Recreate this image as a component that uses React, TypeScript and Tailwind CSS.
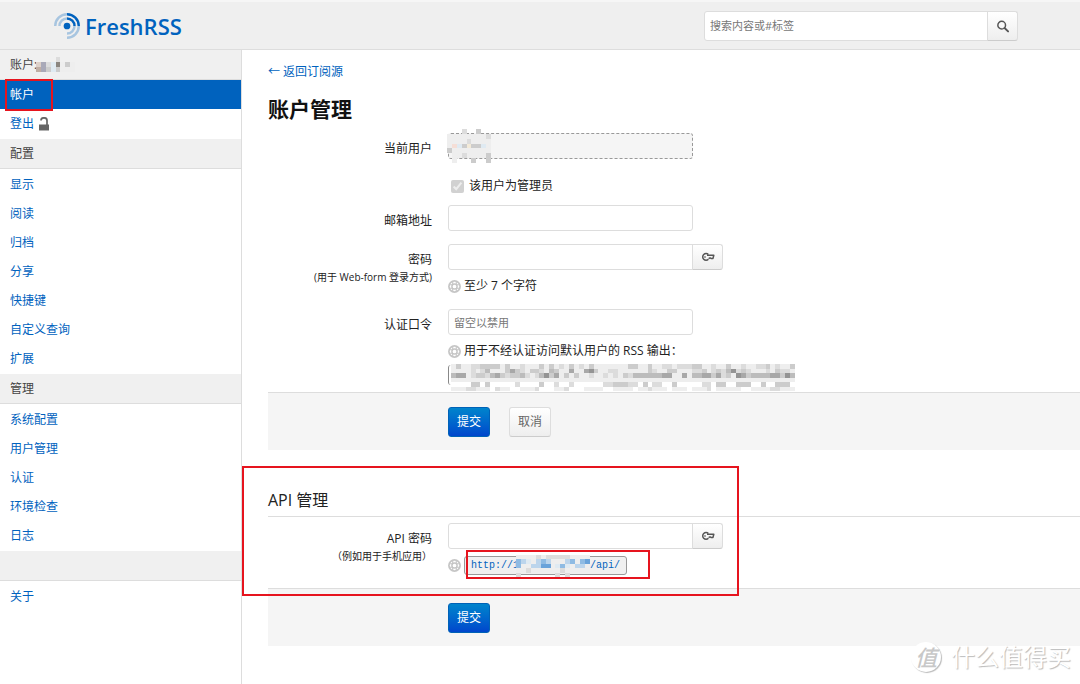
import type { ReactNode } from "react";

const PALETTE: Record<string, string> = {
  "0": "#ffffff",
  "1": "#eeeeee",
  "2": "#dcdcdc",
  "3": "#cccccc",
  "4": "#bcbcbc",
  "5": "#a8a8a8",
  "6": "#949494",
  "7": "#8a857f",
  p: "#f5ded6",
  y: "#f3ead8",
  s: "#ddd0c8",
  t: "#bfaea4",
  u: "#a9a9b8",
  a: "#dfeaf2",
  b: "#bcd5ec",
  c: "#8fbbe3",
  d: "#6aa3da",
};

const USER_BLUR = ["   2  3  ", "111111112", "111121111", "1pa3y33a1", "311111111", " 11211113", " 1   3  3"];
const NAME_BLUR = ["    2   ", "su2a7131", "tu3a3111"];
const API_BLUR = [
  "111121222221111",
  "cba1bcb111bc1cd",
  "c11bbdd1aca1bb1",
  "112111111211111",
  "2       2 2    ",
];
const FEED_BLUR = [
  "1311223333131121113131213121311111113311311221222331121131121122312113",
  "1111212411135321332143115115631122111111321133111223123246232111213221",
  "4551233245323342124635131311211212132444444551151445535231653444455364",
  "1111111111111111111111111111111111111111111111111111111111111111111111",
  "0000330300000200003002002000000223332203022003000002203300333003003330",
  "1112211102110011120001120001111001111011211101110111201111100111122111",
];

function Mosaic({ rows, className }: { rows: string[]; className: string }) {
  return (
    <svg
      aria-hidden="true"
      viewBox={`0 0 ${rows[0].length} ${rows.length}`}
      preserveAspectRatio="none"
      shapeRendering="crispEdges"
      className={className}
    >
      {rows.map((row, y) =>
        row.split("").map((c, x) =>
          c === " " ? null : <rect key={`${x}-${y}`} x={x} y={y} width="1" height="1" fill={PALETTE[c]} />
        )
      )}
    </svg>
  );
}

function Logo() {
  return (
    <svg viewBox="0 0 256 256" className="size-[26px]" fill="none" stroke="#0062be" strokeWidth="24" aria-hidden="true">
      <circle cx="128" cy="128" r="33" fill="#0062be" stroke="none" />
      <g strokeOpacity="0.3">
        <path d="M12,128 A116,116 0 0,1 128,12" />
        <path d="M54,128 A74,74 0 0,1 128,54" />
        <path d="M244,128 A116,116 0 0,1 128,244" />
        <path d="M202,128 A74,74 0 0,1 128,202" />
      </g>
      <path d="M128,12 A116,116 0 0,1 244,128" />
      <path d="M128,54 A74,74 0 0,1 202,128" />
    </svg>
  );
}

function SearchIcon() {
  return (
    <svg viewBox="0 0 16 16" className="size-[14px]" fill="none" stroke="#555" aria-hidden="true">
      <circle cx="6.5" cy="7" r="4.4" strokeWidth="1.7" />
      <path d="M9.8 10.3 L13.8 14.2" strokeWidth="2.2" strokeLinecap="round" />
    </svg>
  );
}

function KeyIcon() {
  return (
    <svg viewBox="0 0 14 10" className="h-[10px] w-[14px]" fill="none" stroke="#555" strokeWidth="1.5" aria-hidden="true">
      <path d="M7.4 2.6 A3.3 3.3 0 1 0 7.4 7.2" />
      <path d="M6 3.2 H12.8 L12 6.4 H10 L9 5.8 L7.6 6.6" strokeLinejoin="round" />
      <path d="M3 5 H5" strokeWidth="1.2" />
    </svg>
  );
}

function HelpIcon() {
  return (
    <svg viewBox="0 0 16 16" className="size-[13px] shrink-0" fill="none" stroke="#c6c6c6" aria-hidden="true">
      <circle cx="8" cy="8" r="6.9" strokeWidth="2.1" />
      <circle cx="8" cy="8" r="3.2" strokeWidth="1.8" />
      <path d="M5.8 1.5 V5.5 M10.2 1.5 V5.5 M5.8 10.5 V14.5 M10.2 10.5 V14.5" strokeWidth="1.4" />
      <path d="M1.5 5.8 H5.5 M10.5 5.8 H14.5 M1.5 10.2 H5.5 M10.5 10.2 H14.5" strokeWidth="1.4" />
    </svg>
  );
}

function LockIcon() {
  return (
    <svg viewBox="0 0 12 14" className="h-[14px] w-[12px]" aria-hidden="true">
      <path d="M3 3.6 V3.4 A3 2.6 0 0 1 9 3.4 V8" fill="none" stroke="#666" strokeWidth="1.7" />
      <rect x="1" y="7.5" width="10" height="6" fill="#666" />
    </svg>
  );
}

function NavHeader({ children }: { children?: ReactNode }) {
  return <div className="flex h-[30px] items-center border-b border-[#ddd] bg-[#f0f0f0] px-[10px] text-[#444]">{children}</div>;
}

function NavItem({ children }: { children: ReactNode }) {
  return (
    <li>
      <a href="#" className="flex h-[29px] items-center px-[10px] text-[#0062be]">
        {children}
      </a>
    </li>
  );
}

const CONFIG_LINKS = ["显示", "阅读", "归档", "分享", "快捷键", "自定义查询", "扩展"];
const ADMIN_LINKS = ["系统配置", "用户管理", "认证", "环境检查", "日志"];

function Sidebar() {
  return (
    <nav className="w-[242px] shrink-0 border-r border-[#ddd]">
      <NavHeader>
        <span className="relative">
          账户:
          <Mosaic rows={NAME_BLUR} className="absolute top-0 left-[26px] h-[15px] w-[39px]" />
        </span>
      </NavHeader>
      <ul className="pb-px">
        <li className="relative">
          <a href="#" className="flex h-[29px] items-center bg-[#0062be] px-[10px] text-white">
            帐户
          </a>
          <span className="absolute -top-px left-[5px] h-[32px] w-[48px] border-2 border-[#e6141e]" />
        </li>
        <NavItem>
          登出
          <span className="ml-1">
            <LockIcon />
          </span>
        </NavItem>
      </ul>
      <NavHeader>配置</NavHeader>
      <ul className="py-px">
        {CONFIG_LINKS.map((l) => (
          <NavItem key={l}>{l}</NavItem>
        ))}
      </ul>
      <NavHeader>管理</NavHeader>
      <ul className="py-px">
        {ADMIN_LINKS.map((l) => (
          <NavItem key={l}>{l}</NavItem>
        ))}
      </ul>
      <NavHeader />
      <ul className="py-px">
        <NavItem>关于</NavItem>
      </ul>
    </nav>
  );
}

type RowProps = { label: string; hint?: string; htmlFor: string; children: ReactNode };

function Row({ label, hint, htmlFor, children }: RowProps) {
  return (
    <div className="flex gap-4 pt-[6px] pb-[7px]">
      <label htmlFor={htmlFor} className="w-[164px] shrink-0 pt-[6px] text-right leading-5">
        {label}
        {hint && <small className="block text-[10px] leading-[14px]">{hint}</small>}
      </label>
      <div>{children}</div>
    </div>
  );
}

function Help({ children }: { children: ReactNode }) {
  return <div className="mt-[6px] flex h-5 items-center gap-[3px]">{children}</div>;
}

function PasswordField({ id }: { id: string }) {
  return (
    <div className="flex">
      <input id={id} type="password" className="h-[26px] w-[245px] rounded-l-[3px] border border-[#ddd] bg-white px-[6px]" />
      <button
        type="button"
        aria-label="显示密码"
        className="-ml-px flex h-[26px] w-[31px] items-center justify-center rounded-r-[3px] border border-[#ddd] border-b-[#ccc] bg-linear-to-b from-white to-[#eee]"
      >
        <KeyIcon />
      </button>
    </div>
  );
}

function Submit() {
  return (
    <button
      type="submit"
      className="h-[30px] w-[42px] rounded-[3px] border border-[#0062b7] bg-linear-to-b from-[#0084cc] to-[#0045cc] text-white"
    >
      提交
    </button>
  );
}

function Actions({ children }: { children: ReactNode }) {
  return <div className="flex gap-[19px] border-t border-[#ddd] bg-[#f5f5f5] pt-[14px] pb-[13px] pl-[180px]">{children}</div>;
}

export default function App() {
  return (
    <div className="relative flex min-h-screen flex-col bg-white font-['Open_Sans','Noto_Sans_CJK_SC',sans-serif] text-[12px] leading-4 text-[#222]">
      <header className="flex h-[50px] items-center border-t-2 border-b border-t-[#f6f6f6] border-b-[#ddd] bg-[#efefef]">
        <a href="#" className="ml-[54px] flex items-center gap-[5px] text-[22px] leading-8 font-semibold text-[#0062be]">
          <Logo />
          FreshRSS
        </a>
        <form className="mr-[62px] ml-auto flex">
          <input
            type="search"
            aria-label="搜索"
            placeholder="搜索内容或#标签"
            className="h-[30px] w-[284px] rounded-l-[3px] border border-[#ddd] bg-white px-[5px] text-[11px] placeholder:text-[#777]"
          />
          <button
            type="submit"
            aria-label="搜索"
            className="-ml-px flex h-[30px] w-[31px] items-center justify-center rounded-r-[3px] border border-[#ddd] border-b-[#ccc] bg-linear-to-b from-white to-[#eee]"
          >
            <SearchIcon />
          </button>
        </form>
      </header>

      <div className="flex grow">
        <Sidebar />
        <main className="min-w-0 grow pt-3 pl-[26px]">
          <a href="#" className="block leading-5 text-[#0062be]">
            ← 返回订阅源
          </a>
          <h1 className="mt-3 mb-[3px] text-[21px] leading-[30px] font-bold text-[#111]">账户管理</h1>

          <form>
            <Row label="当前用户" htmlFor="current">
              <div className="relative">
                <input id="current" disabled className="block h-[26px] w-[245px] rounded-[3px] border border-dashed border-[#999] bg-[#f5f5f5]" />
                <Mosaic rows={USER_BLUR} className="absolute -top-1 -left-px h-[34px] w-[44px]" />
              </div>
            </Row>
            <div className="pt-[10px] pb-[3px] pl-[180px]">
              <label className="flex h-5 items-center gap-[5px]">
                <input type="checkbox" disabled defaultChecked className="ml-[3px] size-[13px]" />
                该用户为管理员
              </label>
            </div>
            <Row label="邮箱地址" htmlFor="mail">
              <input id="mail" type="email" className="block h-[26px] w-[245px] rounded-[3px] border border-[#ddd] bg-white px-[6px]" />
            </Row>
            <Row label="密码" hint="(用于 Web-form 登录方式)" htmlFor="password">
              <PasswordField id="password" />
              <Help>
                <HelpIcon />
                至少 7 个字符
              </Help>
            </Row>
            <Row label="认证口令" htmlFor="token">
              <input
                id="token"
                placeholder="留空以禁用"
                className="block h-[26px] w-[245px] rounded-[3px] border border-[#ddd] bg-white px-[5px] text-[11px] placeholder:text-[#777]"
              />
              <Help>
                <HelpIcon />
                用于不经认证访问默认用户的 RSS 输出：
              </Help>
              <div className="relative mt-1 h-5 w-[347px] rounded-[3px] border-l border-[#888]">
                <Mosaic rows={FEED_BLUR} className="absolute -top-px left-[2px] h-[27px] w-[344px]" />
              </div>
            </Row>
            <Actions>
              <Submit />
              <button type="reset" className="h-[30px] w-[42px] rounded-[3px] border border-[#ddd] border-b-[#ccc] bg-linear-to-b from-white to-[#eee] text-[#666]">
                取消
              </button>
            </Actions>
          </form>

          <form className="relative">
            <h2 className="border-b border-[#ddd] pt-[35px] pb-px text-[16px] leading-[30px]">API 管理</h2>
            <Row label="API 密码" hint="（例如用于手机应用）" htmlFor="api-password">
              <PasswordField id="api-password" />
              <Help>
                <HelpIcon />
                <span className="relative">
                  <a
                    href="#"
                    className="flex h-[19px] w-[163px] items-center justify-between rounded-[3px] border border-[#999] bg-[#f0f0f0] px-[6px] pt-[2px] font-['Liberation_Mono',monospace] text-[10px] text-[#0062be]"
                  >
                    <span>http://1</span>
                    <span>/api/</span>
                  </a>
                  <Mosaic rows={API_BLUR} className="absolute -top-px left-[52px] h-[22px] w-[74px]" />
                  <span className="absolute -top-[6px] left-[2px] h-[29px] w-[184px] border-2 border-[#e6141e]" />
                </span>
              </Help>
            </Row>
            <div className="pt-[6px]">
              <Actions>
                <Submit />
              </Actions>
            </div>
            <span className="pointer-events-none absolute top-4 -left-[26px] h-[130px] w-[497px] border-2 border-[#e6141e]" />
          </form>
        </main>
      </div>

      <div className="absolute right-[9px] bottom-[11px] flex items-center gap-[10px] text-[24px] leading-8 text-white [text-shadow:1px_1px_1px_#bbb]">
        <span className="flex size-[30px] items-center justify-center rounded-full bg-white text-[22px] font-medium text-[#c8c8c8] italic shadow-[1px_1px_1px_#bbb] [text-shadow:none]">
          值
        </span>
        什么值得买
      </div>
    </div>
  );
}
